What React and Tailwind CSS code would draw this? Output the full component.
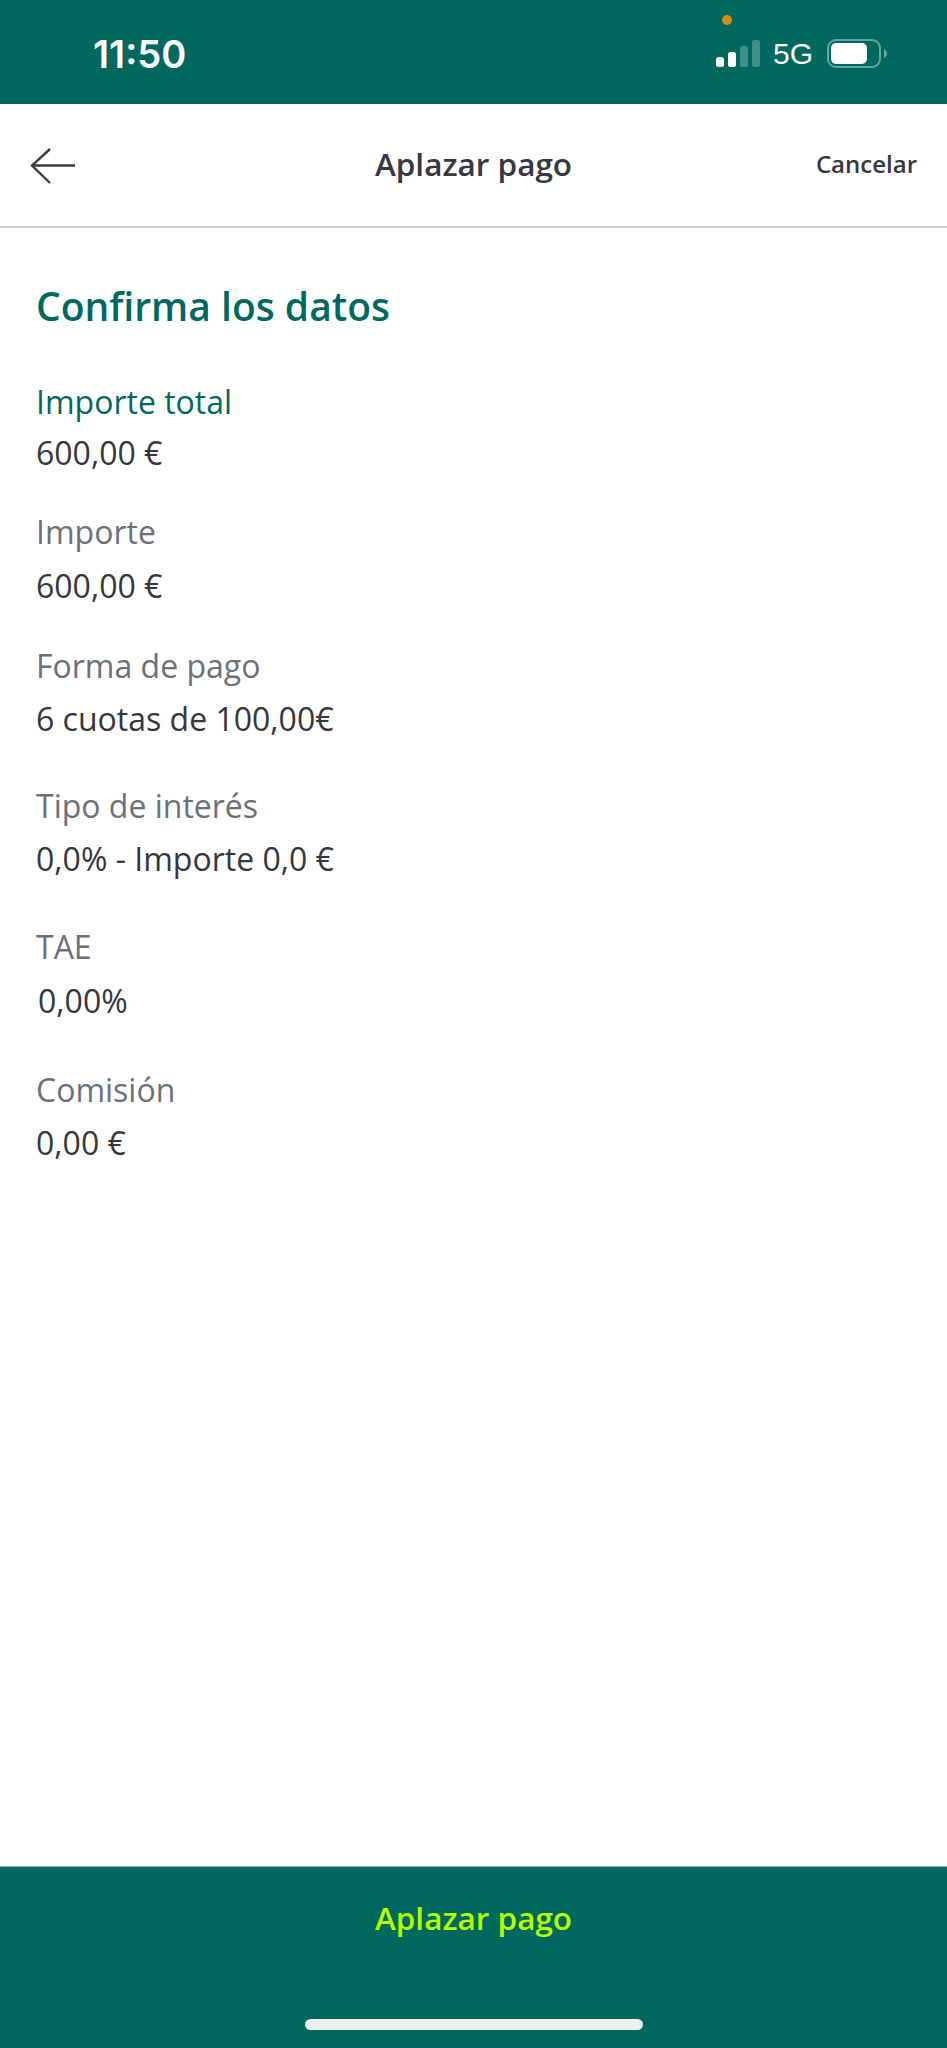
import React from 'react';

const fields = [
  { label: 'Importe', value: '600,00 €', className: 'mt-[39px]', valueClass: 'mt-[14px]' },
  { label: 'Forma de pago', value: '6 cuotas de 100,00€', className: 'mt-[40px]', valueClass: 'mt-[13px]' },
  { label: 'Tipo de interés', value: '0,0% - Importe 0,0 €', className: 'mt-[47px]', valueClass: 'mt-[13px]' },
  { label: 'TAE', value: '0,00%', className: 'mt-[48px]', valueClass: 'mt-[14px] pl-[2px]' },
  { label: 'Comisión', value: '0,00 €', className: 'mt-[49px]', valueClass: 'mt-[13px]' },
];

const StatusBar = () => (
  <div className="relative flex h-[104px] shrink-0 items-start justify-between bg-[#00695f] pl-[93px] pr-[60px] text-white">
    <span className="mt-[31px] font-['Inter',sans-serif] text-[38px] font-semibold leading-[46px]">11:50</span>
    <span className="absolute left-[722px] top-[15px] h-[10px] w-[10px] rounded-full bg-[#d98a14]" />
    <div className="mt-[39px] flex items-center">
      <svg width="46" height="29" viewBox="0 0 46 29" fill="#fff">
        <rect x="0" y="18" width="8" height="10" rx="2.5" />
        <rect x="12" y="13" width="8" height="15" rx="2.5" />
        <rect x="24" y="7" width="8" height="21" rx="2.5" opacity="0.25" />
        <rect x="36" y="1" width="8" height="27" rx="2.5" opacity="0.25" />
      </svg>
      <span className="ml-[11px] font-['Liberation_Sans',sans-serif] text-[30px] leading-[29px]">5G</span>
      <svg className="ml-[14px]" width="60" height="29" viewBox="0 0 60 29" fill="none">
        <rect x="1" y="1" width="52" height="27" rx="8" stroke="#fff" strokeOpacity="0.4" strokeWidth="2" />
        <rect x="4" y="4" width="36" height="21" rx="5" fill="#fff" />
        <path d="M57 10c2 1 3 2.500 3 4.500s-1 3.500-3 4.500z" fill="#fff" fillOpacity="0.4" />
      </svg>
    </div>
  </div>
);

const App = () => {
  return (
    <div className="flex h-[2048px] w-[947px] flex-col bg-white font-['Open_Sans',sans-serif]">
      <StatusBar />

      {/* Header */}
      <div className="relative flex h-[124px] shrink-0 items-center justify-between border-b-[2px] border-[#ccd2dc] pl-[30px] pr-[30px]">
        <svg className="mt-[2px]" width="45" height="36" viewBox="0 0 45 36" fill="none" stroke="#3a3d46" strokeWidth="2.4">
          <path d="M45 17.500H2M20 1 2 17.500 20 35" />
        </svg>
        <h1 className="absolute left-0 right-0 pb-[2px] text-center text-[31.500px] font-semibold text-[#353842]">Aplazar pago</h1>
        <button className="pb-[2px] text-[24px] font-semibold text-[#353842]">Cancelar</button>
      </div>

      {/* Content */}
      <div className="flex-1 px-[36px]">
        <h2 className="mt-[50px] text-[39px] font-semibold leading-[56px] text-[#00695f]">Confirma los datos</h2>
        <div className="mt-[48px] text-[32px] leading-[40px]">
          <p className="text-[#00695f]">Importe total</p>
          <p className="mt-[11px] text-[#35373c]">600,00 €</p>
        </div>
        {fields.map((field) => (
          <div key={field.label} className={`${field.className} text-[32px] leading-[40px]`}>
            <p className="text-[#6c707a]">{field.label}</p>
            <p className={`text-[#35373c] ${field.valueClass}`}>{field.value}</p>
          </div>
        ))}
      </div>

      {/* Footer */}
      <div className="flex h-[182px] shrink-0 flex-col items-center border-t border-[#7fb4af] bg-[#00695f]">
        <button className="mt-[29px] text-[31.500px] font-semibold leading-[44px] text-[#b6ff00]">Aplazar pago</button>
        <div className="mt-[79px] h-[11px] w-[338px] rounded-full bg-[#eef0f0]" />
      </div>
    </div>
  );
};

export default App;
